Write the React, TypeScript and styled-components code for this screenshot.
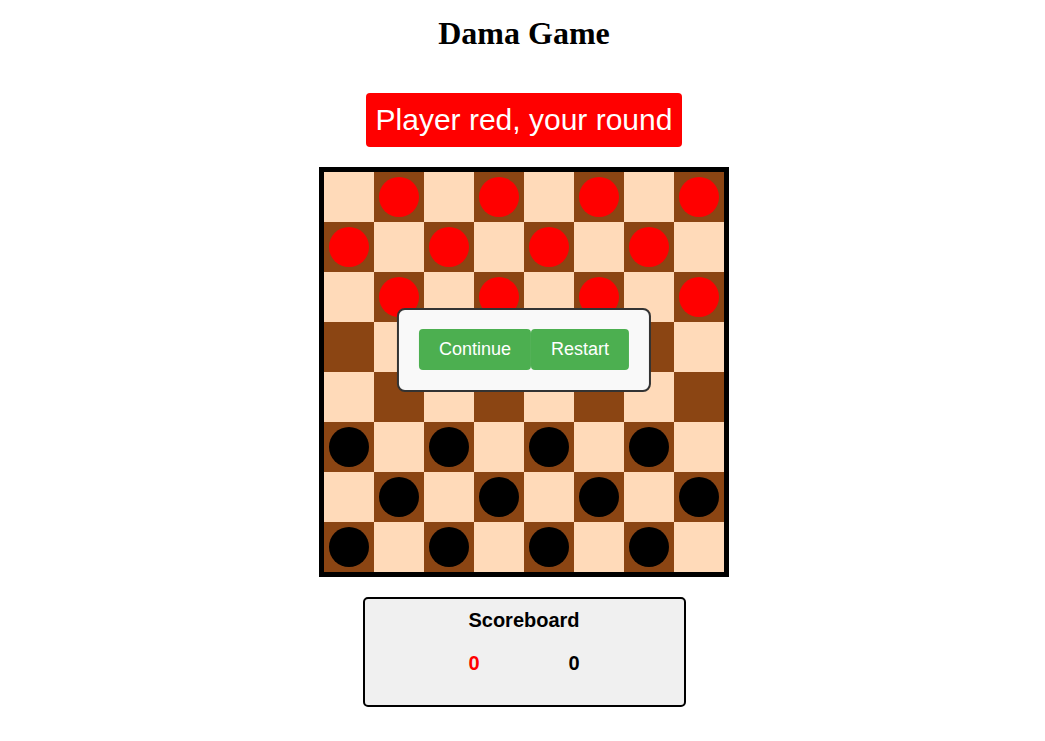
import React from "react";
import styled, { createGlobalStyle } from "styled-components";

const GlobalStyle = createGlobalStyle`
  body {
    margin: 0;
    background: #ffffff;
    font-family: "Liberation Sans", Arial, sans-serif;
  }
`;

const Page = styled.div`
  display: flex;
  flex-direction: column;
  align-items: center;
  padding-top: 15px;
  padding-left: 3px;
`;

const Title = styled.h1`
  margin: 0;
  font-family: "Liberation Serif", "Times New Roman", serif;
  font-size: 32px;
  font-weight: bold;
  line-height: 37px;
  color: #000;
`;

const TurnBanner = styled.div<{ $player: "red" | "black" }>`
  margin-top: 41px;
  padding: 10px 10px;
  background-color: ${(p) => (p.$player === "red" ? "#ff0000" : "#000000")};
  color: #ffffff;
  font-size: 30px;
  line-height: 34px;
  border-radius: 4px;
`;

const BoardWrap = styled.div`
  position: relative;
  margin-top: 20px;
  border: 5px solid #000;
`;

const Board = styled.div`
  display: grid;
  grid-template-columns: repeat(8, 50px);
  grid-template-rows: repeat(8, 50px);
`;

const Square = styled.div<{ $dark: boolean }>`
  display: flex;
  align-items: center;
  justify-content: center;
  background-color: ${(p) => (p.$dark ? "#8b4513" : "#ffdab9")};
`;

const Piece = styled.div<{ $color: string }>`
  width: 40px;
  height: 40px;
  border-radius: 50%;
  background-color: ${(p) => p.$color};
`;

// pause menu sits over the middle of the board
const Dialog = styled.div`
  position: absolute;
  top: 136px;
  left: 50%;
  transform: translateX(-50%);
  display: flex;
  padding: 19px 20px 20px;
  background: #f9f9f9;
  border: 2px solid #333;
  border-radius: 8px;
`;

const ActionButton = styled.button`
  padding: 10px 20px;
  border: none;
  border-radius: 4px;
  background-color: #4caf50;
  color: #ffffff;
  font-family: "Liberation Sans", Arial, sans-serif;
  font-size: 18px;
  line-height: 21px;
  cursor: pointer;
`;

const Scoreboard = styled.div`
  margin-top: 20px;
  width: 319px;
  height: 106px;
  border: 2px solid #000;
  border-radius: 5px;
  background: #f0f0f0;
  display: flex;
  flex-direction: column;
  align-items: center;
`;

const ScoreTitle = styled.div`
  margin-top: 10px;
  font-size: 20px;
  font-weight: bold;
  line-height: 23px;
`;

const ScoreRow = styled.div`
  display: flex;
  gap: 89px;
  margin-top: 20px;
`;

const Score = styled.span<{ $color: string }>`
  font-size: 20px;
  font-weight: bold;
  line-height: 23px;
  color: ${(p) => p.$color};
`;

const pieceAt = (row: number, col: number): string | null => {
  if ((row + col) % 2 === 0) return null;
  if (row < 3) return "#ff0000";
  if (row > 4) return "#000000";
  return null;
};

const App = () => {
  const cells = [];
  for (let r = 0; r < 8; r++) {
    for (let c = 0; c < 8; c++) {
      const piece = pieceAt(r, c);
      cells.push(
        <Square key={`${r}-${c}`} $dark={(r + c) % 2 === 1}>
          {piece && <Piece $color={piece} />}
        </Square>
      );
    }
  }

  return (
    <>
      <GlobalStyle />
      <Page>
        <Title>Dama Game</Title>
        <TurnBanner $player="red">Player red, your round</TurnBanner>
        <BoardWrap>
          <Board>{cells}</Board>
          <Dialog>
            <ActionButton>Continue</ActionButton>
            <ActionButton>Restart</ActionButton>
          </Dialog>
        </BoardWrap>
        <Scoreboard>
          <ScoreTitle>Scoreboard</ScoreTitle>
          <ScoreRow>
            <Score $color="#ff0000">0</Score>
            <Score $color="#000000">0</Score>
          </ScoreRow>
        </Scoreboard>
      </Page>
    </>
  );
};

export default App;
